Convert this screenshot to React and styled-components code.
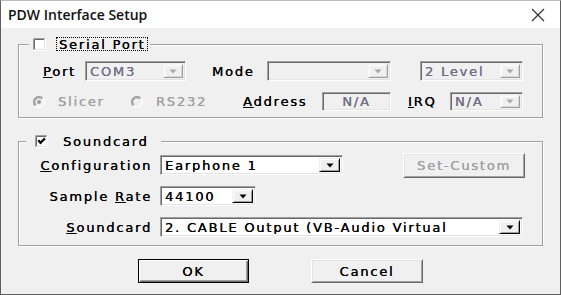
import React from 'react';
import styled, { createGlobalStyle } from 'styled-components';

const GlobalStyle = createGlobalStyle`
  html, body { margin: 0; padding: 0; background: #fff; }
  body { font-family: "DejaVu Sans", Verdana, sans-serif; }
  * { box-sizing: border-box; }
`;

const Window = styled.div`
  width: 561px;
  height: 295px;
  display: flex;
  flex-direction: column;
  border: 1px solid #5f5f5f;
  border-top-color: #bcbcbc;
  background: #f0f0f0;
  overflow: hidden;
  font-size: 13px;
  letter-spacing: 1.8px;
  color: #000;
  text-shadow: 0.2px 0 0 currentColor;
`;

const TitleBar = styled.div`
  height: 27px;
  flex: none;
  background: #fff;
  display: flex;
  align-items: center;
  justify-content: space-between;
  padding: 0 15px 0 7px;
`;

const Title = styled.span`
  font: 600 14px "Open Sans", "Noto Sans", sans-serif;
  letter-spacing: 0;
  text-shadow: none;
  color: #111;
`;

const Body = styled.div`
  flex: 1;
  display: flex;
  flex-direction: column;
  padding: 9px 17px 0 17px;
`;

const Group = styled.fieldset`
  margin: ${p => p.$mt}px 0 0;
  padding: ${p => p.$pt}px 0 ${p => p.$pb}px;
  border: 1px solid #a0a0a0;
  box-shadow: inset 1px 1px 0 #fff, 1px 1px 0 #fff;
  min-width: 0;
  display: flex;
  flex-direction: column;
  gap: ${p => p.$gap}px;
`;

const Legend = styled.legend`
  margin-left: ${p => p.$ml}px;
  padding: 0 ${p => p.$pr}px 0 ${p => p.$pl}px;
  height: 14px;
  line-height: 14px;
  background: #f0f0f0;
  display: flex;
  align-items: center;
  gap: ${p => p.$gap}px;
`;

const LegendText = styled.span`
  padding: 0 1px 0 2px;
  height: 14px;
  line-height: 13px;
  border: 1px ${p => (p.$focus ? 'dotted #000' : 'solid transparent')};
`;

const Row = styled.div`
  display: flex;
  align-items: center;
  height: ${p => p.$h}px;
  padding-left: ${p => p.$pl || 0}px;
`;

const Label = styled.span`
  flex: none;
  width: ${p => p.$w}px;
  margin-left: ${p => p.$ml || 0}px;
  text-align: ${p => (p.$right ? 'right' : 'left')};
  white-space: nowrap;
  color: ${p => (p.$disabled ? '#a0a0a0' : '#000')};
`;

const FormLabel = styled(Label)`
  margin-right: 8px;
`;

const Sunken = styled.div`
  flex: none;
  width: ${p => p.$w}px;
  height: ${p => p.$h || 20}px;
  margin-left: ${p => p.$ml || 0}px;
  display: flex;
  align-items: stretch;
  border: 1px solid;
  border-color: #a0a0a0 #fff #fff #a0a0a0;
  box-shadow: inset 1px 1px 0 #696969, inset -1px -1px 0 #e3e3e3;
  background: ${p => (p.$disabled ? '#f0f0f0' : '#fff')};
  padding: 2px;
`;

const Value = styled.span`
  flex: 1;
  min-width: 0;
  padding-left: ${p => (p.$center ? 0 : 2)}px;
  display: flex;
  align-items: center;
  justify-content: ${p => (p.$center ? 'center' : 'flex-start')};
  white-space: nowrap;
  overflow: hidden;
  color: ${p => (p.$disabled ? '#6f6f88' : '#000')};
`;

const DropButton = styled.span`
  flex: none;
  width: ${p => p.$w}px;
  display: flex;
  align-items: center;
  justify-content: center;
  background: #f0f0f0;
  border: 1px solid;
  border-color: ${p => (p.$disabled ? '#f4f4f4 #a0a0a0 #a0a0a0 #f4f4f4' : '#f0f0f0 #000 #000 #f0f0f0')};
  box-shadow: ${p =>
    p.$disabled
      ? 'inset 1px 1px 0 #fff, inset -1px -1px 0 #d8d8d8'
      : 'inset 1px 1px 0 #fff, inset -1px -1px 0 #a0a0a0'};
`;

const RadioWrap = styled.span`
  flex: none;
  width: ${p => p.$w}px;
  display: flex;
  align-items: center;
  gap: 13px;
  color: #a0a0a0;
  white-space: nowrap;
`;

const PushButton = styled.button`
  flex: none;
  width: ${p => p.$w}px;
  height: ${p => p.$h || 24}px;
  margin-left: ${p => p.$ml || 0}px;
  padding: 0;
  font: 13px "DejaVu Sans", Verdana, sans-serif;
  letter-spacing: 1.8px;
  text-shadow: 0.2px 0 0 currentColor;
  color: ${p => (p.disabled ? '#a0a0a0' : '#000')};
  background: #f0f0f0;
  border: 1px solid;
  border-color: ${p => (p.$default ? '#000' : '#fff #696969 #696969 #fff')};
  box-shadow: ${p =>
    p.$default
      ? 'inset 1px 1px 0 #fff, inset -1px -1px 0 #696969, inset -2px -2px 0 #a0a0a0'
      : 'inset 1px 1px 0 #e3e3e3, inset -1px -1px 0 #a0a0a0'};
`;

const ButtonBar = styled.div`
  display: flex;
  justify-content: center;
  gap: 62px;
  margin-top: 13px;
`;

const CheckBox = ({ checked }) => (
  <svg width="13" height="13" viewBox="0 0 13 13">
    <rect x="0" y="0" width="13" height="13" fill="#fff" />
    <path d="M0.5 12.5 V0.5 H12.5" stroke="#a0a0a0" fill="none" />
    <path d="M1.5 11.5 V1.5 H11.5" stroke="#696969" fill="none" />
    <path d="M0 12.5 H12.5 V0" stroke="#fff" fill="none" />
    <path d="M1 11.5 H11.5 V1" stroke="#e3e3e3" fill="none" />
    {checked && <path d="M3.3 5.3 L5.5 7.8 L9.9 3.4" stroke="#000" strokeWidth="2.2" fill="none" />}
  </svg>
);

const RadioIcon = ({ checked }) => (
  <svg width="12" height="12" viewBox="0 0 12 12">
    <circle cx="6" cy="6" r="5" fill="#f0f0f0" />
    <path d="M2.2 9.8 A5.3 5.3 0 0 1 9.8 2.2" stroke="#a0a0a0" strokeWidth="1.4" fill="none" />
    <path d="M3 8.9 A4.1 4.1 0 0 1 8.9 3" stroke="#8c8c8c" strokeWidth="1" fill="none" />
    <path d="M9.8 2.2 A5.3 5.3 0 0 1 2.2 9.8" stroke="#fff" strokeWidth="1.2" fill="none" />
    {checked && <circle cx="6" cy="6" r="2" fill="#9c9c9c" />}
  </svg>
);

const Arrow = ({ disabled }) => (
  <svg width="8" height="5" viewBox="0 0 8 5">
    <path d="M0.5 0.5 H7.5 L4 4.5 Z" fill={disabled ? '#a8a8a8' : '#000'} />
  </svg>
);

const CloseIcon = () => (
  <svg width="14" height="14" viewBox="0 0 14 14">
    <path d="M1 1 L13 13 M13 1 L1 13" stroke="#2b2b2b" strokeWidth="1.1" fill="none" />
  </svg>
);

const Combo = ({ w, h, value, disabled, ml, btn = 20 }) => (
  <Sunken $w={w} $h={h} $ml={ml} $disabled={disabled}>
    <Value $disabled={disabled}>{value}</Value>
    <DropButton $w={btn} $disabled={disabled}>
      <Arrow disabled={disabled} />
    </DropButton>
  </Sunken>
);

const Radio = ({ w, checked, children }) => (
  <RadioWrap $w={w}>
    <RadioIcon checked={checked} />
    {children}
  </RadioWrap>
);

export default function App() {
  return (
    <>
      <GlobalStyle />
      <Window>
        <TitleBar>
          <Title>PDW Interface Setup</Title>
          <CloseIcon />
        </TitleBar>
        <Body>
          <Group $mt={0} $pt={10} $pb={6} $gap={11}>
            <Legend $ml={10} $pl={4} $pr={2} $gap={10}>
              <CheckBox />
              <LegendText $focus>Serial Port</LegendText>
            </Legend>
            <Row $h={20} $pl={24}>
              <Label $w={42}><u>P</u>ort</Label>
              <Combo w={101} value="COM3" disabled />
              <Label $w={55} $ml={26}>Mode</Label>
              <Combo w={124} value="" disabled />
              <Combo w={103} ml={29} value="2 Level" disabled />
            </Row>
            <Row $h={19} $pl={14}>
              <Radio w={98} checked>Slicer</Radio>
              <Radio w={112}>RS232</Radio>
              <Label $w={79}><u>A</u>ddress</Label>
              <Sunken $w={69} $h={19} $disabled>
                <Value $disabled $center>N/A</Value>
              </Sunken>
              <Label $w={42} $ml={17}><u>I</u>RQ</Label>
              <Combo w={73} h={19} value="N/A" disabled />
            </Row>
          </Group>

          <Group $mt={16} $pt={5} $pb={6} $gap={7}>
            <Legend $ml={7} $pl={9} $pr={10} $gap={12}>
              <CheckBox checked />
              <LegendText>Soundcard</LegendText>
            </Legend>
            <Row $h={24}>
              <FormLabel $w={133} $right><u>C</u>onfiguration</FormLabel>
              <Combo w={183} value="Earphone 1" btn={21} />
              <PushButton $w={122} $h={25} $ml={60} disabled>Set-Custom</PushButton>
            </Row>
            <Row $h={24}>
              <FormLabel $w={133} $right>Sample <u>R</u>ate</FormLabel>
              <Combo w={96} value="44100" btn={21} />
            </Row>
            <Row $h={24}>
              <FormLabel $w={133} $right><u>S</u>oundcard</FormLabel>
              <Combo w={363} value="2. CABLE Output (VB-Audio Virtual" btn={21} />
            </Row>
          </Group>

          <ButtonBar>
            <PushButton $w={111} $default>OK</PushButton>
            <PushButton $w={112}>Cancel</PushButton>
          </ButtonBar>
        </Body>
      </Window>
    </>
  );
}
